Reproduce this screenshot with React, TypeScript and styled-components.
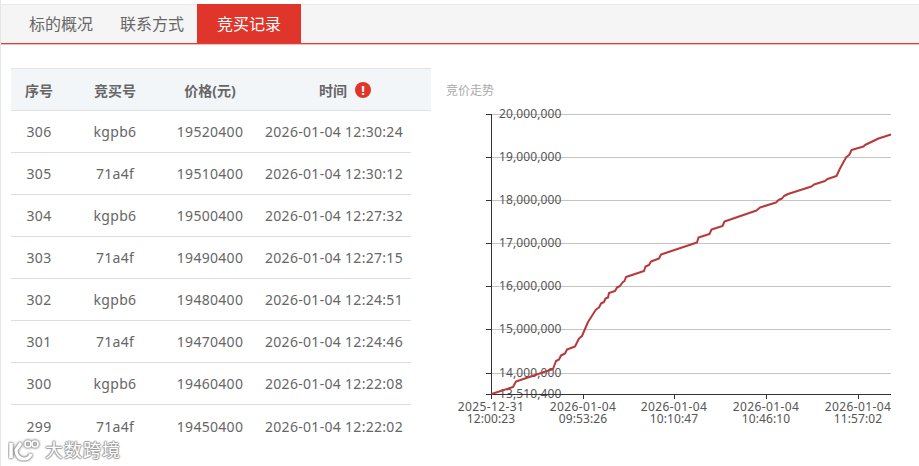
import React from "react";
import styled, { createGlobalStyle } from "styled-components";

const GlobalStyle = createGlobalStyle`
  html, body {
    margin: 0;
    padding: 0;
    width: 919px;
    height: 466px;
    overflow: hidden;
    background: #fff;
    font-family: "Noto Sans", "Noto Sans CJK SC", sans-serif;
  }
`;

// ==================== STYLES ====================
const Page = styled.div`
  position: relative;
  width: 919px;
  height: 466px;
  box-sizing: border-box;
  padding-top: 4px;
  overflow: hidden;
  border-left: 1px solid #e6e6e6;
`;

const TabBar = styled.div`
  display: flex;
  height: 40px;
  box-sizing: border-box;
  padding-left: 15px;
  gap: 1px;
  background: #f5f5f5;
  border-top: 1px solid #e8e8e8;
  border-bottom: 1px solid #dc4038;
  box-shadow: 0 1px 0 rgba(220, 64, 56, 0.35);
`;

const Tab = styled.div<{ $active?: boolean }>`
  margin-top: -1px;
  margin-left: ${({ $active }) => ($active ? "-1px" : "0")};
  height: 39px;
  line-height: 41px;
  padding: 0 ${({ $active }) => ($active ? "20px" : "13px")};
  margin-bottom: -1px;
  font-size: 16px;
  color: ${({ $active }) => ($active ? "#fff" : "#666")};
  background: ${({ $active }) => ($active ? "#df352b" : "transparent")};
`;

const Body = styled.div`
  display: flex;
  padding: 24px 0 0 10px;
`;

const TableWrap = styled.div`
  flex: 0 0 420px;
`;

const HeadRow = styled.div`
  display: grid;
  grid-template-columns: 56px 96px 94px 1fr;
  height: 43px;
  box-sizing: border-box;
  align-items: center;
  background: #f3f6f9;
  border-top: 1px solid #e3e6e9;
  border-bottom: 1px solid #dfe3e6;
`;

const HeadCell = styled.div`
  display: flex;
  justify-content: center;
  align-items: center;
  gap: 8px;
  font-size: 14px;
  font-weight: 700;
  color: #666;

  &:last-child {
    padding-left: 2px;
  }
`;

const AlertDot = styled.span`
  display: inline-block;
  width: 16px;
  height: 16px;
  line-height: 16px;
  border-radius: 50%;
  background: #df352b;
  color: #fff;
  font-size: 13px;
  font-weight: 700;
  text-align: center;
`;

const DataRow = styled.div`
  display: grid;
  grid-template-columns: 56px 96px 94px 1fr;
  width: 400px;
  height: 42px;
  box-sizing: border-box;
  align-items: center;
  border-bottom: 1px solid #ddd;

  &:last-child {
    border-bottom: none;
  }
`;

const DataCell = styled.div`
  text-align: center;
  font-size: 14px;
  letter-spacing: 0.3px;
  color: #666;
  white-space: nowrap;
`;

const ChartBox = styled.div`
  flex: 1;
`;

const ChartTitle = styled.div`
  padding: 15px 0 1px 15px;
  font-size: 12px;
  line-height: 16px;
  color: #aaa;
`;

const ChartSvg = styled.svg`
  display: block;
  width: 488px;
  height: 366px;
`;

const AxisText = styled.text<{ $wide?: boolean }>`
  font-family: "Noto Sans", sans-serif;
  font-size: 12px;
  letter-spacing: ${({ $wide }) => ($wide ? "0.4px" : "0.1px")};
  fill: #555;
`;

const Watermark = styled.div`
  position: absolute;
  left: 7px;
  top: 437px;
  display: flex;
  align-items: center;
  gap: 3px;
  font-size: 18px;
  line-height: 26px;
  letter-spacing: 1px;
  color: #fff;
  text-shadow: 1px 0 1px #999, -1px 0 1px #999, 0 1px 1px #999, 0 -1px 1px #999;
`;

// ==================== DATA ====================
const ROWS = [
  ["306", "kgpb6", "19520400", "2026-01-04 12:30:24"],
  ["305", "71a4f", "19510400", "2026-01-04 12:30:12"],
  ["304", "kgpb6", "19500400", "2026-01-04 12:27:32"],
  ["303", "71a4f", "19490400", "2026-01-04 12:27:15"],
  ["302", "kgpb6", "19480400", "2026-01-04 12:24:51"],
  ["301", "71a4f", "19470400", "2026-01-04 12:24:46"],
  ["300", "kgpb6", "19460400", "2026-01-04 12:22:08"],
  ["299", "71a4f", "19450400", "2026-01-04 12:22:02"],
];

const Y_TICKS: [string, number][] = [
  ["20,000,000", 114],
  ["19,000,000", 157],
  ["18,000,000", 200],
  ["17,000,000", 243],
  ["16,000,000", 286],
  ["15,000,000", 329],
  ["14,000,000", 373],
  ["13,510,400", 394],
];

const X_TICKS: [string, string, number][] = [
  ["2025-12-31", "12:00:23", 491],
  ["2026-01-04", "09:53:26", 583],
  ["2026-01-04", "10:10:47", 674],
  ["2026-01-04", "10:46:10", 766],
  ["2026-01-04", "11:57:02", 858],
];

const LINE =
  "491.5,394 513,387 516,381.5 553,369 556,361 559,359.5 561,355.5 565,353.5 567,349.5 575,346.5 579,338.5 582,336 588,322 596,309.5 599,307.5 601,303.5 604,302 605.5,298.5 608,297.5 609,293 615,291 617,287.5 620,286 622.5,282.5 624.5,281 626,277 644,271 645.5,266.5 649,265 651,261.5 659,258.5 661,254.5 697,242.5 698.5,237.5 709.5,234 711.5,229.5 722.5,226 724.5,221.5 756.5,210.5 760,207.5 776,202.5 778.5,200 782,198.5 784,196 788,194 811.5,186.5 814,184.5 825,181 827.5,179 836.5,176 840,168.5 846,157.5 849.5,154.5 851.5,150 863.5,146.5 865,145 878.5,138.5 891,134.5";

// ==================== COMPOSANT ====================
const Chart: React.FC = () => (
  <ChartSvg viewBox="431 100 488 366">
    {Y_TICKS.slice(0, 7).map(([, y]) => (
      <line key={y} x1={491} x2={891} y1={y + 0.5} y2={y + 0.5} stroke="#c4c4c4" />
    ))}
    {Y_TICKS.map(([label, y]) => (
      <g key={label}>
        <line x1={486} x2={491} y1={y + 0.5} y2={y + 0.5} stroke="#333" />
        <AxisText x={499} y={y + 4}>
          {label}
        </AxisText>
      </g>
    ))}
    <line x1={491.5} x2={491.5} y1={114} y2={395} stroke="#333" />
    <line x1={486} x2={891} y1={394.5} y2={394.5} stroke="#333" />
    {X_TICKS.map(([date, time, x]) => (
      <g key={time}>
        <line x1={x + 0.5} x2={x + 0.5} y1={394} y2={399} stroke="#333" />
        <AxisText $wide x={x} y={411} textAnchor="middle">
          {date}
        </AxisText>
        <AxisText x={x} y={423} textAnchor="middle">
          {time}
        </AxisText>
      </g>
    ))}
    <polyline points={LINE} fill="none" stroke="#b8393a" strokeWidth={2} strokeLinejoin="round" />
  </ChartSvg>
);

const Logo: React.FC = () => (
  <svg width="34" height="24" viewBox="0 0 34 24" fill="none" stroke="#fff">
    <g style={{ filter: "drop-shadow(0 0 1px #777) drop-shadow(0 0 1px #999)" }}>
      <path d="M3 5v15" strokeWidth="3.6" />
      <path d="M13 5L8 12c0 5 3 9 8 9 3 0 6-2 7-5" strokeWidth="3.2" />
      <circle cx="20" cy="6" r="3" strokeWidth="1.6" />
      <circle cx="27" cy="6" r="3" strokeWidth="1.6" />
    </g>
  </svg>
);

const App: React.FC = () => (
  <Page>
    <GlobalStyle />
    <TabBar>
      <Tab>标的概况</Tab>
      <Tab>联系方式</Tab>
      <Tab $active>竞买记录</Tab>
    </TabBar>
    <Body>
      <TableWrap>
        <HeadRow>
          <HeadCell>序号</HeadCell>
          <HeadCell>竞买号</HeadCell>
          <HeadCell>价格(元)</HeadCell>
          <HeadCell>
            时间 <AlertDot>!</AlertDot>
          </HeadCell>
        </HeadRow>
        {ROWS.map((row) => (
          <DataRow key={row[0]}>
            {row.map((cell) => (
              <DataCell key={cell}>{cell}</DataCell>
            ))}
          </DataRow>
        ))}
      </TableWrap>
      <ChartBox>
        <ChartTitle>竞价走势</ChartTitle>
        <Chart />
      </ChartBox>
    </Body>
    <Watermark>
      <Logo />
      大数跨境
    </Watermark>
  </Page>
);

export default App;
